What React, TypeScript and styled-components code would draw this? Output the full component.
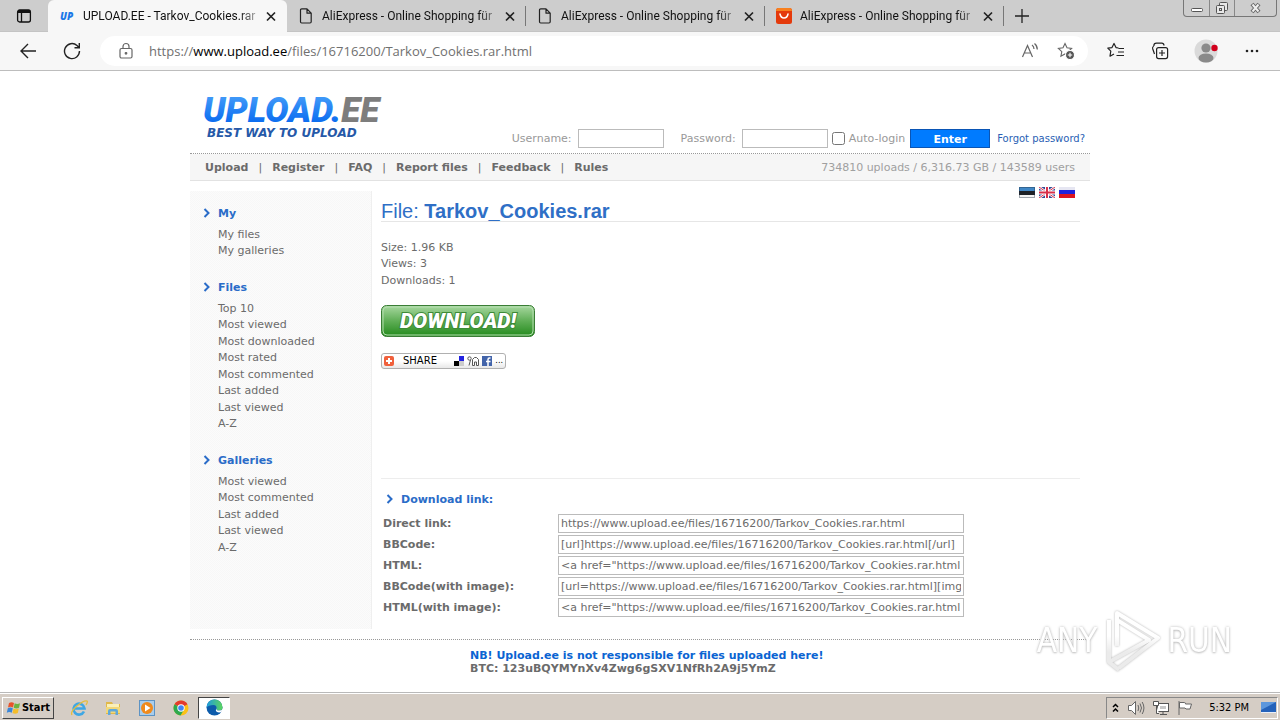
import React from 'react';
import styled, { createGlobalStyle, css } from 'styled-components';

const GlobalStyle = createGlobalStyle`
  *, *::before, *::after { box-sizing: border-box; }
  body { margin: 0; background: #fff; font-family: "DejaVu Sans", Verdana, sans-serif; font-size: 11px; color: #6b6b6b; }
  button, input { font: inherit; color: inherit; }
  a { color: inherit; text-decoration: none; }
  h1, h2, p, ul, dl { margin: 0; padding: 0; }
  ul { list-style: none; }
  svg { display: block; flex: none; }
`;

const uiFont = '"Open Sans", "Noto Sans", sans-serif';

const Desktop = styled.div`
  min-height: 100vh;
  display: flex;
  flex-direction: column;
`;

/* ---------- browser chrome ---------- */

const TabStrip = styled.div`
  position: relative;
  height: 32px;
  display: flex;
  background: #cdcdcd;
  border-bottom: 1px solid #c4c4c4;
  font-family: Roboto, sans-serif;
  font-size: 12px;
  color: #111;
`;

const IconButton = styled.button<{ $w: number }>`
  width: ${(p) => p.$w}px;
  flex: none;
  border: 0;
  padding: 0;
  background: none;
  display: flex;
  align-items: center;
  justify-content: center;
`;

const Tab = styled.div<{ $active?: boolean }>`
  flex: 0 1 239px;
  min-width: 0;
  height: 32px;
  padding: 0 2px 0 11px;
  display: flex;
  align-items: center;
  ${(p) =>
    p.$active
      ? css`
          background: #f7f7f7;
          border-radius: 6px 6px 0 0;
        `
      : css`
          background: linear-gradient(#777, #777) right center / 1px 20px no-repeat;
        `}
`;

const TabTitle = styled.span`
  flex: 1;
  margin-left: 8px;
  overflow: hidden;
  white-space: nowrap;
  line-height: 20px;
  mask-image: linear-gradient(to right, #000 90%, rgba(0, 0, 0, 0.3));
`;

const WindowControls = styled.div`
  position: absolute;
  top: 0;
  right: 3px;
  display: flex;
  height: 17px;
  border: 1px solid #777;
  border-top: 0;
  border-radius: 0 0 4px 4px;
  button + button { border-left: 1px solid #888; }
`;

const Toolbar = styled.div`
  height: 39px;
  display: flex;
  align-items: center;
  background: #f7f7f7;
  border-bottom: 1px solid #bdbdbd;
  padding: 0 6px 0 10px;
  button { height: 30px; }
`;

const AddressBar = styled.div`
  flex: 1;
  min-width: 0;
  height: 30px;
  margin: 0 6px 0 2px;
  padding: 0 4px 0 18px;
  display: flex;
  align-items: center;
  border-radius: 15px;
  background: #fff;
`;

const Url = styled.div`
  flex: 1;
  min-width: 0;
  overflow: hidden;
  white-space: nowrap;
  margin-left: 15px;
  font-family: ${uiFont};
  font-size: 13px;
  line-height: 20px;
  color: #707070;
  b { font-weight: 400; color: #000; }
`;

/* ---------- web page ---------- */

const Page = styled.div`
  flex: 1;
  width: 100%;
  max-width: 900px;
  margin: 0 auto;
`;

const Header = styled.header`
  height: 83px;
  display: flex;
  justify-content: space-between;
  align-items: flex-end;
  padding: 0 5px 5px 14px;
  border-bottom: 1px dotted #999;
`;

const LogoLink = styled.a`
  align-self: flex-start;
  padding-top: 20px;
`;

const LoginForm = styled.form`
  display: flex;
  align-items: center;
  color: #999;
  line-height: 19px;
`;

const LoginField = styled.label`
  display: flex;
  gap: 6px;
  margin-right: 17px;
  &:nth-of-type(2) { margin-right: 4px; }
`;

const LoginInput = styled.input`
  width: 86px;
  height: 19px;
  border: 1px solid #bbb;
  padding: 0 2px;
  background: #fff;
`;

const AutoLogin = styled.label`
  display: flex;
  align-items: center;
  gap: 4px;
  input { width: 13px; height: 13px; margin: 0; }
`;

const EnterButton = styled.button`
  width: 80px;
  height: 19px;
  margin: 0 7px 0 5px;
  padding: 0;
  border: 1px solid #0a55b5;
  background: #007bff;
  color: #fff;
  font-weight: 700;
`;

const ForgotLink = styled.a`
  font-size: 10px;
  color: #2a5fb4;
`;

const NavBar = styled.div`
  height: 27px;
  display: flex;
  align-items: center;
  justify-content: space-between;
  padding: 0 15px;
  background: #f6f6f6;
  border-bottom: 1px solid #e2e2e2;
`;

const NavLinks = styled.nav`
  display: flex;
  font-weight: 700;
  a + a::before { content: "|"; font-weight: 400; margin: 0 10px; }
`;

const Stats = styled.span`
  color: #a0a0a0;
`;

const Columns = styled.div`
  display: flex;
  align-items: stretch;
  padding-bottom: 10px;
  border-bottom: 1px dotted #999;
`;

const Sidebar = styled.aside`
  width: 182px;
  flex: none;
  margin-top: 10px;
  padding: 13px 0 0 13px;
  border-right: 1px solid #efefef;
  background: repeating-conic-gradient(#f7f7f7 0 25%, #fbfbfb 0 50%) 0 0 / 2px 2px;
`;

const Section = styled.section`
  margin-bottom: 18px;
`;

const SectionTitle = styled.h2`
  display: flex;
  align-items: center;
  gap: 7px;
  height: 18px;
  margin-bottom: 5px;
  font-size: 11px;
  color: #2a6cc8;
`;

const Lines = styled.ul`
  line-height: 16px;
  li:nth-child(even) { padding-bottom: 1px; }
`;

const SideLines = styled(Lines)`
  padding-left: 15px;
`;

const Content = styled.main`
  flex: 1;
  min-width: 0;
  padding: 6px 10px 10px 9px;
`;

const Flags = styled.div`
  display: flex;
  justify-content: flex-end;
  gap: 4px;
  height: 12px;
  padding-right: 5px;
`;

const FileTitle = styled.h1`
  height: 23px;
  margin-bottom: 18px;
  border-bottom: 1px solid #e6e6e6;
  font: 400 20px/24px "Liberation Sans", Arial, sans-serif;
  color: #2f6fc6;
`;

const DownloadLink = styled.a`
  display: block;
  width: 154px;
  margin: 16px 0;
`;

const ShareButton = styled.button`
  width: 125px;
  height: 16px;
  padding: 0 2px;
  display: flex;
  align-items: center;
  border: 1px solid #b0b0b0;
  border-radius: 3px;
  background: linear-gradient(#fff, #fff 50%, #e8e8e8);
  color: #000;
  font-size: 10px;
  line-height: 14px;
  gap: 3px;
  span { flex: 1; text-align: left; padding-left: 6px; }
  small { font-size: 8px; }
`;

const LinksPanel = styled.section`
  margin-top: 109px;
  padding: 11px 0 0 2px;
  border-top: 1px solid #ededed;
`;

const LinksTitle = styled(SectionTitle)`
  padding-left: 3px;
  margin-bottom: 6px;
`;

const LinkRow = styled.div`
  display: flex;
  align-items: center;
  height: 19px;
  margin-bottom: 2px;
  label { width: 175px; flex: none; font-weight: 700; }
  input {
    flex: 0 1 406px;
    min-width: 0;
    height: 19px;
    padding: 0 2px;
    border: 1px solid #bbb;
    background: #fff;
  }
`;

const Footer = styled.footer`
  padding: 9px 0 16px 280px;
  font-weight: 700;
  line-height: 13px;
  strong { color: #0a64d2; }
`;

const Watermark = styled.div`
  position: fixed;
  right: 48px;
  bottom: 46px;
  display: flex;
  align-items: center;
  gap: 6px;
  font: 400 33px/62px "DejaVu Sans Condensed", sans-serif;
  color: #fff;
  text-shadow: 0 0 3px #bbb, 0 1px 2px #ccc;
  pointer-events: none;
  svg { filter: drop-shadow(0 0 1px #b4b4b4); }
`;

/* ---------- taskbar ---------- */

const Taskbar = styled.div`
  height: 28px;
  display: flex;
  align-items: center;
  padding: 2px 2px 0;
  background: #d5cdc5;
  border-top: 1px solid #b9b9b9;
  box-shadow: inset 0 1px 0 #fff;
  font-family: "DejaVu Sans Condensed", Tahoma, sans-serif;
  color: #000;
`;

const StartButton = styled.button`
  width: 52px;
  height: 22px;
  margin-right: 8px;
  padding: 0;
  display: flex;
  align-items: center;
  justify-content: center;
  border: 1px solid;
  border-color: #fff #444 #444 #fff;
  background: #d5cdc5;
  font-weight: 700;
`;

const TaskButton = styled.button<{ $pressed?: boolean }>`
  width: ${(p) => (p.$pressed ? 32 : 34)}px;
  height: 22px;
  padding: 0;
  display: flex;
  align-items: center;
  justify-content: center;
  border: ${(p) => (p.$pressed ? '1px solid' : '0')};
  border-color: #444 #fff #fff #444;
  background: ${(p) => (p.$pressed ? '#fff' : 'none')};
`;

const Tray = styled.div`
  height: 22px;
  margin-left: auto;
  padding: 0 1px 0 5px;
  display: flex;
  align-items: center;
  gap: 8px;
  border: 1px solid;
  border-color: #888 #fff #fff #888;
  time { margin: 0 4px 0 8px; }
`;

/* ---------- icons ---------- */

const CloseIcon = () => (
  <svg width="16" height="16" viewBox="0 0 16 16" fill="none" stroke="#222" strokeWidth="1.7">
    <path d="M4 4.5l8 8M12 4.5l-8 8" />
  </svg>
);
const FileIcon = () => (
  <svg width="16" height="16" viewBox="0 0 16 16" fill="none" stroke="#222" strokeWidth="1.2" strokeLinejoin="round">
    <path d="M3.7 .9H9l4.2 4.2v8.7q0 1.2-1.2 1.2H3.7q-1.2 0-1.2-1.2V2.1Q2.5.9 3.7.9zM9 1v4.2h4.2" />
  </svg>
);
const UpIcon = () => (
  <svg width="16" height="16" viewBox="0 0 16 16">
    <text x="1" y="12" fontFamily="Open Sans" fontSize="10" fontWeight="800" fontStyle="italic" fill="#1c78e8">UP</text>
  </svg>
);
const AliIcon = () => (
  <svg width="16" height="16" viewBox="0 0 16 16">
    <rect width="16" height="16" rx="2.5" fill="#e43a0c" />
    <path d="M2.5 0h11Q16 0 16 3H0Q0 0 2.5 0z" fill="#f8801f" />
    <path d="M4 6q.8 4 4 4t4-4" fill="none" stroke="#fff" strokeWidth="1.5" strokeLinecap="round" />
  </svg>
);
const Chevron = () => (
  <svg width="8" height="10" viewBox="0 0 8 10" fill="none" stroke="#2a6cc8" strokeWidth="2">
    <path d="M1.5 1l4 4-4 4" />
  </svg>
);
const STAR = 'M8 1.5l2 4.3 4.6.6-3.4 3.2.9 4.7L8 12l-4.1 2.3.9-4.7L1.4 6.4 6 5.8z';

const EstonianFlag = () => (
  <svg width="16" height="11" viewBox="0 0 16 11" role="img" aria-label="Eesti">
    <rect width="16" height="11" fill="#f4f4f4" />
    <rect width="16" height="4" fill="#3f87c6" />
    <rect y="4" width="16" height="4" fill="#1d2126" />
    <rect x=".5" y=".5" width="15" height="10" fill="none" stroke="#234" strokeOpacity=".4" />
  </svg>
);
const BritishFlag = () => (
  <svg width="16" height="11" viewBox="0 0 16 11" role="img" aria-label="English">
    <rect width="16" height="11" fill="#354a94" />
    <path d="M0 0l16 11M16 0L0 11" stroke="#fff" strokeWidth="2.4" />
    <path d="M0 0l16 11M16 0L0 11" stroke="#d8304a" strokeWidth="1" />
    <path d="M8 0v11M0 5.5h16" stroke="#fff" strokeWidth="4" />
    <path d="M8 0v11M0 5.5h16" stroke="#d8304a" strokeWidth="2" />
  </svg>
);
const RussianFlag = () => (
  <svg width="16" height="11" viewBox="0 0 16 11" role="img" aria-label="Русский">
    <rect width="16" height="4" fill="#e6e6f2" />
    <rect y="3" width="16" height="5" fill="#1f22dc" />
    <rect y="7" width="16" height="4" fill="#dd1520" />
  </svg>
);

const Logo = () => (
  <svg width="190" height="50" viewBox="0 0 190 50" role="img" aria-label="Upload.ee">
    <defs>
      <linearGradient id="blue" x1="0" y1="0" x2="0" y2="1">
        <stop offset=".2" stopColor="#3d97f8" />
        <stop offset=".8" stopColor="#0b6cf0" />
      </linearGradient>
    </defs>
    <text x="-1" y="31" fontFamily="Roboto, sans-serif" fontSize="35" fontWeight="900" fontStyle="italic" fill="url(#blue)">
      UPLOAD.<tspan fill="#7d7d7d">EE</tspan>
    </text>
    <text x="3" y="46" fontFamily="DejaVu Sans" fontSize="12" fontWeight="700" fontStyle="italic" fill="#2659a8">BEST WAY TO UPLOAD</text>
  </svg>
);

const DownloadArt = () => (
  <svg width="154" height="32" viewBox="0 0 154 32">
    <defs>
      <linearGradient id="green" x1="0" y1="0" x2="0" y2="1">
        <stop offset="0" stopColor="#a8d8a0" />
        <stop offset=".5" stopColor="#5fae56" />
        <stop offset="1" stopColor="#238a1c" />
      </linearGradient>
    </defs>
    <rect x=".5" y=".5" width="153" height="31" rx="5" fill="url(#green)" stroke="#3a7d35" />
    <rect x="2" y="2" width="150" height="28" rx="4" fill="none" stroke="#b5deb0" />
    <text x="77" y="23" textAnchor="middle" fontFamily="Roboto" fontSize="21" fontWeight="900" fontStyle="italic" fill="#fff" stroke="#3c8a36" strokeWidth="2" paintOrder="stroke">DOWNLOAD!</text>
  </svg>
);

/* ---------- data ---------- */

const fileUrl = 'https://www.upload.ee/files/16716200/Tarkov_Cookies.rar.html';

const sections = [
  { title: 'My', items: ['My files', 'My galleries'] },
  {
    title: 'Files',
    items: ['Top 10', 'Most viewed', 'Most downloaded', 'Most rated', 'Most commented', 'Last added', 'Last viewed', 'A-Z'],
  },
  { title: 'Galleries', items: ['Most viewed', 'Most commented', 'Last added', 'Last viewed', 'A-Z'] },
];

const links = [
  { id: 'direct', label: 'Direct link:', value: fileUrl },
  { id: 'bb', label: 'BBCode:', value: `[url]${fileUrl}[/url]` },
  { id: 'html', label: 'HTML:', value: `<a href="${fileUrl}">Tarkov_Cookies.rar</a>` },
  { id: 'bbimg', label: 'BBCode(with image):', value: `[url=${fileUrl}][img][/img][/url]` },
  { id: 'htmlimg', label: 'HTML(with image):', value: `<a href="${fileUrl}"><img></a>` },
];

const tabs = [
  { title: 'UPLOAD.EE - Tarkov_Cookies.rar', icon: <UpIcon />, active: true },
  { title: 'AliExpress - Online Shopping für', icon: <FileIcon /> },
  { title: 'AliExpress - Online Shopping für', icon: <FileIcon /> },
  { title: 'AliExpress - Online Shopping für', icon: <AliIcon /> },
];

const Browser = () => (
  <>
    <TabStrip>
      <IconButton $w={48} aria-label="Tab actions">
        <svg width="16" height="16" viewBox="0 0 16 16" fill="none" stroke="#111" strokeWidth="1.3">
          <rect x="1.6" y="2" width="12.8" height="12" rx="2" />
          <path d="M2 3.5h12" strokeWidth="3" />
          <path d="M5.5 4v10" />
        </svg>
      </IconButton>
      {tabs.map((t, i) => (
        <Tab key={i} $active={t.active}>
          {t.icon}
          <TabTitle>{t.title}</TabTitle>
          <IconButton $w={28} aria-label="Close tab"><CloseIcon /></IconButton>
        </Tab>
      ))}
      <IconButton $w={36} aria-label="New tab">
        <svg width="16" height="16" viewBox="0 0 16 16" stroke="#222" strokeWidth="1.3"><path d="M8 1v14M1 8h14" /></svg>
      </IconButton>
      <WindowControls>
        <IconButton $w={25} aria-label="Minimize">
          <svg width="14" height="14" viewBox="0 0 14 14" fill="#fff" stroke="#555"><rect x="1.5" y="7.5" width="11" height="3" rx="1" /></svg>
        </IconButton>
        <IconButton $w={25} aria-label="Restore">
          <svg width="14" height="14" viewBox="0 0 14 14" fill="#e8e8e8" stroke="#555">
            <rect x="4.5" y="1.5" width="8" height="8" rx="1" />
            <rect x="1.5" y="4.5" width="8" height="8" rx="1" />
            <rect x="4.5" y="7.5" width="2" height="2" />
          </svg>
        </IconButton>
        <IconButton $w={42} aria-label="Close">
          <svg width="14" height="14" viewBox="0 0 14 14" fill="none">
            <path d="M3 3l7 8M10 3l-7 8" stroke="#666" strokeWidth="4" />
            <path d="M3.5 3.5l6 7M9.5 3.5l-6 7" stroke="#eee" strokeWidth="2" />
          </svg>
        </IconButton>
      </WindowControls>
    </TabStrip>
    <Toolbar>
      <IconButton $w={36} aria-label="Back">
        <svg width="18" height="18" viewBox="0 0 18 18" fill="none" stroke="#222" strokeWidth="1.4"><path d="M17 9H2M9 2L2 9l7 7" /></svg>
      </IconButton>
      <IconButton $w={52} aria-label="Refresh">
        <svg width="18" height="18" viewBox="0 0 18 18" fill="none" stroke="#222" strokeWidth="1.4"><path d="M16.5 9a7.5 7.5 0 1 1-2.5-5.5L16 5.5M16.3 1v4.8h-4.8" /></svg>
      </IconButton>
      <AddressBar>
        <svg width="16" height="18" viewBox="0 0 16 18" fill="none" stroke="#666" strokeWidth="1.2">
          <rect x="2" y="6.5" width="12" height="9.5" rx="1.5" />
          <path d="M5 6.5V4.5a3 3 0 0 1 6 0v2" />
          <circle cx="8" cy="11.3" r=".8" fill="#666" />
        </svg>
        <Url role="textbox" tabIndex={0} aria-label="Address">
          https://<b>www.upload.ee</b>/files/16716200/Tarkov_Cookies.rar.html
        </Url>
        <IconButton $w={36} aria-label="Read aloud">
          <svg width="18" height="18" viewBox="0 0 18 18" fill="none" stroke="#666" strokeWidth="1.2">
            <path d="M1.5 15L6.5 3.5 11.5 15M3.3 11h6.4M11 3q2 1.5 2 4M13.5 1.5q2.8 2.3 2.8 6" />
          </svg>
        </IconButton>
        <IconButton $w={36} aria-label="Add to favorites">
          <svg width="18" height="18" viewBox="0 0 18 18" fill="none" stroke="#666" strokeWidth="1.1">
            <path d={STAR} />
            <circle cx="13" cy="13" r="4.5" fill="#555" stroke="#fff" />
            <path d="M13 10.8v4.4M10.8 13h4.4" stroke="#fff" />
          </svg>
        </IconButton>
      </AddressBar>
      <IconButton $w={44} aria-label="Favorites">
        <svg width="18" height="18" viewBox="0 0 18 18" fill="none" stroke="#222" strokeWidth="1.2" strokeLinejoin="round">
          <path d="M11.5 6L9 5.6 7 1.5 5 5.6.8 6.2l3 3-.8 5 4-2.2M11 10h6M11.5 6.5H17M9.5 13.5H17" />
        </svg>
      </IconButton>
      <IconButton $w={44} aria-label="Collections">
        <svg width="18" height="18" viewBox="0 0 18 18" fill="none" stroke="#222" strokeWidth="1.2">
          <rect x="5.6" y="5.6" width="11" height="11" rx="2" />
          <path d="M11 8v6M8 11h6M3.5 12L1.6 6.5Q1.2 4.8 2.8 4.2M13 3.5Q12.8 1.2 10.8 1.2H5.5Q2.8 1.2 2.8 4" />
        </svg>
      </IconButton>
      <IconButton $w={48} aria-label="Profile">
        <svg width="24" height="24" viewBox="0 0 24 24">
          <circle cx="12" cy="12" r="11.5" fill="#dadada" />
          <circle cx="12" cy="9" r="4.6" fill="#8a8a8a" />
          <ellipse cx="12" cy="19" rx="7.5" ry="4.5" fill="#8a8a8a" />
          <circle cx="20.5" cy="9" r="3.2" fill="#d1001c" />
        </svg>
      </IconButton>
      <IconButton $w={44} aria-label="Settings and more">
        <svg width="16" height="16" viewBox="0 0 16 16" fill="#222">
          <circle cx="3" cy="8" r="1.3" /><circle cx="8" cy="8" r="1.3" /><circle cx="13" cy="8" r="1.3" />
        </svg>
      </IconButton>
    </Toolbar>
  </>
);

const StartBar = () => (
  <Taskbar>
    <StartButton>
      <svg width="16" height="16" viewBox="0 0 16 16">
        <path d="M3 3q2.5-1.5 5 0L7 7.5q-2.5-1.5-5 0z" fill="#e8532a" />
        <path d="M8.7 3.3q2.5 1.5 5.3 0L13 7.8q-2.5 1.5-5.3 0z" fill="#6db33f" />
        <path d="M1.8 8.3q2.5-1.5 5 0l-1 4.5q-2.5-1.5-5 0z" fill="#3a86d8" />
        <path d="M7.5 8.6q2.5 1.5 5.3 0l-1 4.5q-2.5 1.5-5.3 0z" fill="#f5bd2a" />
      </svg>
      Start
    </StartButton>
    <TaskButton aria-label="Internet Explorer">
      <svg width="18" height="18" viewBox="0 0 18 18" fill="none">
        <path d="M14 12.5a5.5 5.5 0 1 1 .5-3H5" stroke="#3fa7e4" strokeWidth="2.6" />
        <path d="M2 16Q0 13 7 7t10-5q1 1-1 4" stroke="#e5bd3c" strokeWidth="1.3" />
      </svg>
    </TaskButton>
    <TaskButton aria-label="Explorer">
      <svg width="18" height="18" viewBox="0 0 18 18">
        <path d="M2 3h6l1 2h7v10H2z" fill="#e0b84a" />
        <path d="M3 5h12v5H3z" fill="#faf0b8" />
        <path d="M2 8h14v6H2z" fill="#f2d878" />
        <path d="M4 16v-4q0-2 2-2h6q2 0 2 2v4h-2.5v-3.5h-5V16z" fill="#5fa8da" />
      </svg>
    </TaskButton>
    <TaskButton aria-label="Media Player">
      <svg width="18" height="18" viewBox="0 0 18 18">
        <rect x="1.5" y="1.5" width="15" height="15" fill="#a9cdec" stroke="#5d93c4" />
        <circle cx="9" cy="9" r="6" fill="#f08a1c" />
        <path d="M7 5.5v7l5.5-3.5z" fill="#fff" />
      </svg>
    </TaskButton>
    <TaskButton aria-label="Chrome">
      <svg width="16" height="16" viewBox="0 0 16 16">
        <circle cx="8" cy="8" r="7.5" fill="#fbc116" />
        <path d="M8 8L1.5 4.2A7.5 7.5 0 0 1 14.5 4.2z" fill="#e33b2e" />
        <path d="M8 8l-6.5-3.8A7.5 7.5 0 0 0 7.5 15.5L11 9.7z" fill="#2da94f" />
        <circle cx="8" cy="8" r="3.7" fill="#fff" />
        <circle cx="8" cy="8" r="2.8" fill="#4285f4" />
      </svg>
    </TaskButton>
    <TaskButton $pressed aria-label="Edge">
      <svg width="17" height="17" viewBox="0 0 17 17">
        <defs>
          <linearGradient id="edge" x1="0" y1="0" x2="1" y2="0">
            <stop offset="0" stopColor="#1e9be0" />
            <stop offset="1" stopColor="#5cd65c" />
          </linearGradient>
        </defs>
        <circle cx="8.5" cy="8.5" r="8" fill="#0d5cab" />
        <path d="M.5 8.5a8 8 0 0 1 16 0q0 3-3.5 3-3 0-2.5-2Q11 6 7.5 6 2.5 6 .5 8.5z" fill="url(#edge)" />
        <path d="M10.5 9.5Q9 11.5 11 13q2.5 1 5-.5l1-2.5q-1.5 1.5-4 1.5-3 0-2.5-2z" fill="#fff" />
      </svg>
    </TaskButton>
    <Tray>
      <svg width="7" height="10" viewBox="0 0 7 10" fill="none" stroke="#000" strokeWidth="1.5"><path d="M1 4l2.5-2.5L6 4M1 8.5L3.5 6 6 8.5" /></svg>
      <svg width="18" height="16" viewBox="0 0 18 16" fill="#fff" stroke="#666">
        <path d="M1.5 5.5h3l4-4v13l-4-4h-3z" />
        <path d="M11 5q1.5 3 0 6M13 3.5q3 4.5 0 9M15.2 2q3.5 6 0 12" fill="none" />
      </svg>
      <svg width="16" height="16" viewBox="0 0 16 16" fill="#fff" stroke="#555">
        <rect x="4.5" y="3.5" width="11" height="8" />
        <rect x="7" y="6" width="6" height="3" fill="#c8c8c8" stroke="none" />
        <path d="M7 14.5h7M10 12v2M.5 1.5h5v4h-5zM3.5 5v8.5H6" />
      </svg>
      <svg width="16" height="16" viewBox="0 0 16 16" fill="#fff" stroke="#666">
        <path d="M2 1v14M2.5 2.5h5q1 0 1 1.5h6l-1.5 5H9L8 8H2.5z" />
      </svg>
      <time>5:32 PM</time>
      <svg width="15" height="14" viewBox="0 0 15 14">
        <rect y="1" width="15" height="11" fill="#2462ba" />
        <path d="M0 1h15L0 9z" fill="#5c97dd" />
        <path d="M0 11.5h15" stroke="#e8eef8" />
      </svg>
    </Tray>
  </Taskbar>
);

export default function App() {
  return (
    <Desktop>
      <GlobalStyle />
      <Browser />
      <Page>
        <Header>
          <LogoLink href="#"><Logo /></LogoLink>
          <LoginForm>
            <LoginField>Username: <LoginInput type="text" /></LoginField>
            <LoginField>Password: <LoginInput type="password" /></LoginField>
            <AutoLogin><input type="checkbox" />Auto-login</AutoLogin>
            <EnterButton type="button">Enter</EnterButton>
            <ForgotLink href="#">Forgot password?</ForgotLink>
          </LoginForm>
        </Header>
        <NavBar>
          <NavLinks>
            {['Upload', 'Register', 'FAQ', 'Report files', 'Feedback', 'Rules'].map((l) => (
              <a key={l} href="#">{l}</a>
            ))}
          </NavLinks>
          <Stats>734810 uploads / 6,316.73 GB / 143589 users</Stats>
        </NavBar>
        <Columns>
          <Sidebar>
            {sections.map((s) => (
              <Section key={s.title}>
                <SectionTitle><Chevron />{s.title}</SectionTitle>
                <SideLines>
                  {s.items.map((i) => (
                    <li key={i}><a href="#">{i}</a></li>
                  ))}
                </SideLines>
              </Section>
            ))}
          </Sidebar>
          <Content>
            <Flags>
              <a href="#"><EstonianFlag /></a>
              <a href="#"><BritishFlag /></a>
              <a href="#"><RussianFlag /></a>
            </Flags>
            <FileTitle>File: <b>Tarkov_Cookies.rar</b></FileTitle>
            <Lines>
              <li>Size: 1.96 KB</li>
              <li>Views: 3</li>
              <li>Downloads: 1</li>
            </Lines>
            <DownloadLink href="#"><DownloadArt /></DownloadLink>
            <ShareButton>
              <svg width="10" height="10" viewBox="0 0 10 10">
                <rect width="10" height="10" rx="2" fill="#f0603c" />
                <path d="M5 2v6M2 5h6" stroke="#fff" strokeWidth="2" />
              </svg>
              <span>SHARE</span>
              <svg width="10" height="10" viewBox="0 0 10 10">
                <path d="M5 0h5v5H5z" fill="#2222e0" /><path d="M0 5h5v5H0z" fill="#000" /><path d="M5 5h5v5H5z" fill="#ccc" />
              </svg>
              <svg width="12" height="10" viewBox="0 0 12 10" fill="#fff" stroke="#555">
                <circle cx="2.5" cy="2.5" r="1.7" />
                <path d="M3.5 4L2 9.5M5.5 9.5V3.5l2-2h2l2 2v6h-2V6h-2v3.5z" />
              </svg>
              <svg width="10" height="10" viewBox="0 0 10 10">
                <rect width="10" height="10" fill="#4264aa" />
                <path d="M8.5 2H7.5Q6 2 6 3.5V10M4 5.5h4.5" fill="none" stroke="#fff" strokeWidth="1.5" />
              </svg>
              <small>...</small>
            </ShareButton>
            <LinksPanel>
              <LinksTitle><Chevron />Download link:</LinksTitle>
              {links.map((l) => (
                <LinkRow key={l.id}>
                  <label htmlFor={l.id}>{l.label}</label>
                  <input id={l.id} type="text" readOnly value={l.value} />
                </LinkRow>
              ))}
            </LinksPanel>
          </Content>
        </Columns>
        <Footer>
          <p><strong>NB! Upload.ee is not responsible for files uploaded here!</strong></p>
          <p>BTC: 123uBQYMYnXv4Zwg6gSXV1NfRh2A9j5YmZ</p>
        </Footer>
      </Page>
      <StartBar />
      <Watermark>
        <span>ANY</span>
        <svg width="58" height="66" viewBox="0 0 58 66" fill="none" strokeWidth="4" strokeLinejoin="round">
          <defs>
            <linearGradient id="fade" gradientUnits="userSpaceOnUse" x1="0" y1="28" x2="0" y2="44">
              <stop offset="0" stopColor="#fff" />
              <stop offset="1" stopColor="#ebebeb" />
            </linearGradient>
          </defs>
          <path d="M14 38V5l41 25-39 30M6 12v42l40-22L14 12M6 54l10 8" stroke="url(#fade)" />
        </svg>
        <span>RUN</span>
      </Watermark>
    </Desktop>
  );
}
